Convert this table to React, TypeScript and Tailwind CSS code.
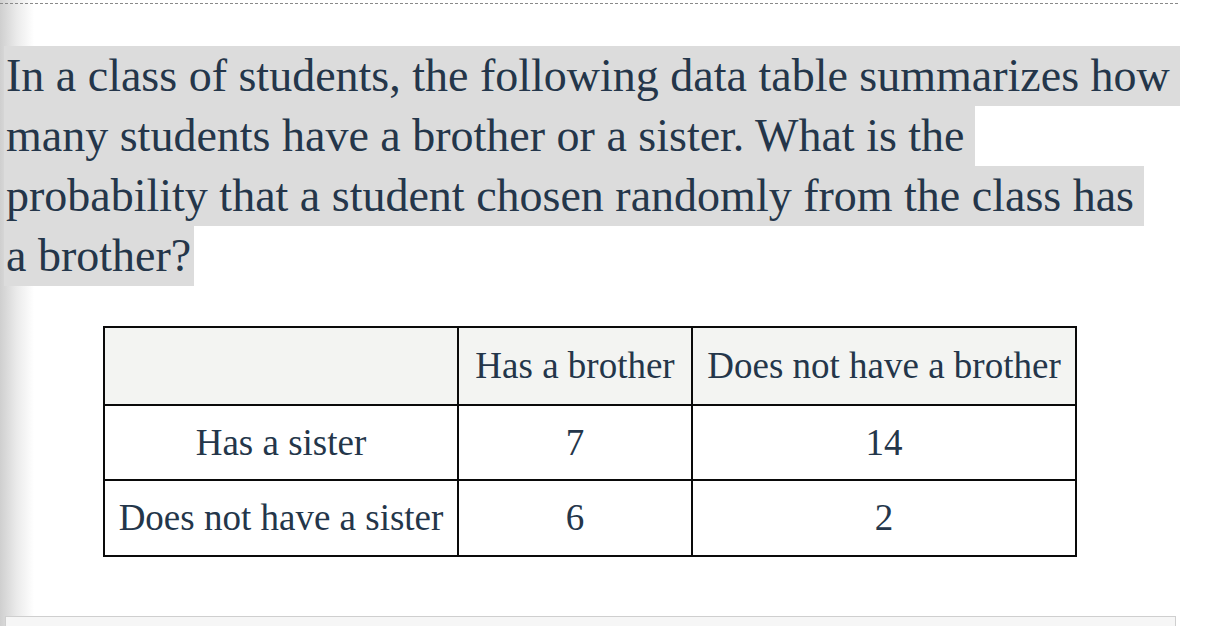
export default function App() {
  const lines = [
    { t: "In a class of students, the following data table summarizes how", pr: "pr-[10px]" },
    { t: "many students have a brother or a sister. What is the", pr: "pr-[10px]" },
    { t: "probability that a student chosen randomly from the class has", pr: "pr-[10px]" },
    { t: "a brother?", pr: "pr-[3px]" },
  ];
  const cell = "border-2 border-[#0a0a0a] text-center align-middle font-normal";
  return (
    <div
      className="relative w-[1220px] h-[626px] bg-white overflow-hidden text-[#24364a]"
      style={{ fontFamily: '"Liberation Serif", "DejaVu Serif", serif' }}
    >
      <div className="pointer-events-none absolute left-0 top-0 h-full w-[34px] bg-gradient-to-r from-[#cfcfcf] via-[#ebebeb] to-transparent" />
      <div className="relative w-[1178px]">
        <div className="mt-[3px] border-t border-dashed border-[#8a8a8a]" />
        <div className="mt-[42px] pl-[4px] flex flex-col items-start">
          {lines.map((l, i) => (
            <div key={i} className={`w-fit bg-[#dcdcdc] h-[60px] leading-[60px] pl-[2px] text-[46px] whitespace-nowrap ${l.pr}`}>
              {l.t}
            </div>
          ))}
        </div>
        <table className="mt-[40px] ml-[103px] w-[974px] border-collapse text-[37px] leading-[40px]">
          <tbody>
            <tr className="h-[78px] bg-[#f3f4f2]">
              <td className={`${cell} w-[354px]`}></td>
              <td className={`${cell} w-[234px]`}>Has a brother</td>
              <td className={`${cell}`}>Does not have a brother</td>
            </tr>
            <tr className="h-[75px]">
              <td className={cell}>Has a sister</td>
              <td className={cell}>7</td>
              <td className={cell}>14</td>
            </tr>
            <tr className="h-[76px]">
              <td className={cell}>Does not have a sister</td>
              <td className={cell}>6</td>
              <td className={cell}>2</td>
            </tr>
          </tbody>
        </table>
        <div className="mt-[59px] ml-[5px] w-[1171px] h-[20px] border border-[#cfcfcf] bg-[#f6f6f6]" />
      </div>
    </div>
  );
}
